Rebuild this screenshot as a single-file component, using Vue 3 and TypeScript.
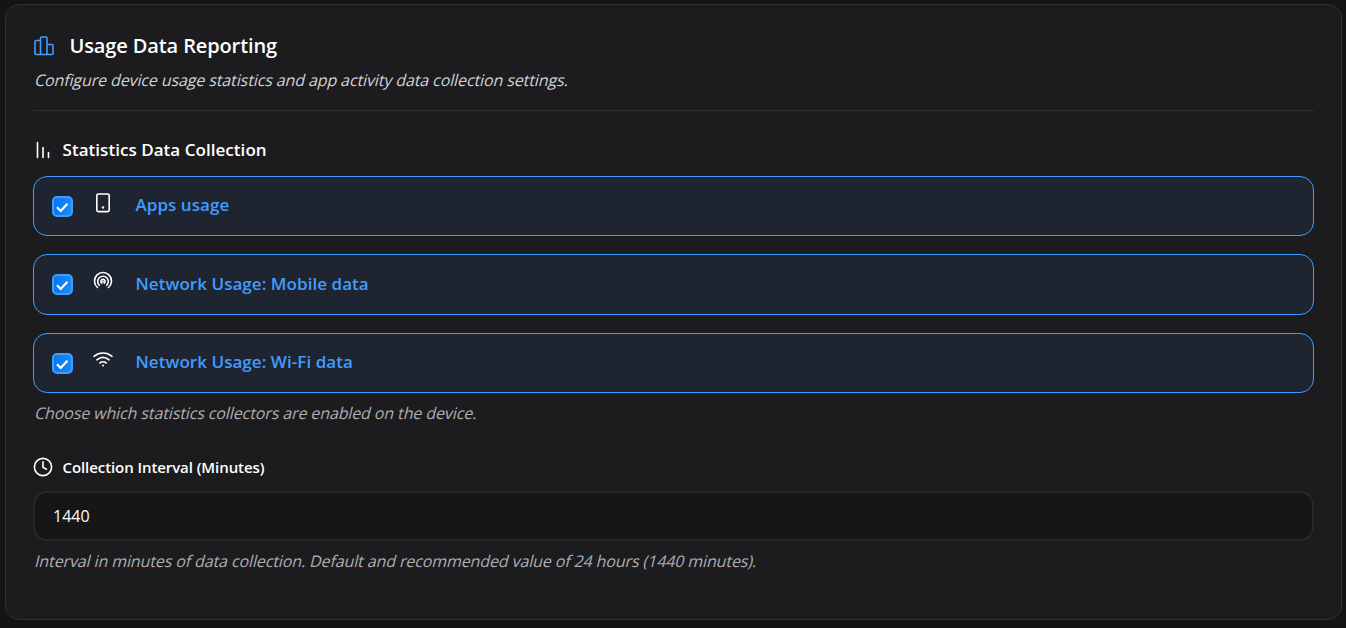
<script setup lang="ts">
import { ref } from 'vue'

interface Collector {
  id: string
  label: string
  icon: 'phone' | 'radio' | 'wifi'
  enabled: boolean
}

const collectors = ref<Collector[]>([
  { id: 'apps', label: 'Apps usage', icon: 'phone', enabled: true },
  { id: 'mobile', label: 'Network Usage: Mobile data', icon: 'radio', enabled: true },
  { id: 'wifi', label: 'Network Usage: Wi-Fi data', icon: 'wifi', enabled: true },
])

const interval = ref('1440')
</script>

<template>
  <main class="page">
    <section class="card">
      <header class="card-header">
        <h2 class="title">
          <svg class="title-icon" viewBox="0 0 20 20" width="20" height="20">
            <path d="M6.500 4.500H2a1 1 0 0 0-1 1V17.500a1 1 0 0 0 1 1h4.500M6.500 18.500V2a1 1 0 0 1 1-1h4.500a1 1 0 0 1 1 1v16.500M13 8.500h5a1 1 0 0 1 1 1v8a1 1 0 0 1-1 1H6.500" />
          </svg>
          <span class="title-text">Usage Data Reporting</span>
        </h2>
        <p class="subtitle">Configure device usage statistics and app activity data collection settings.</p>
      </header>

      <div class="group">
        <h3 class="label">
          <svg class="label-icon" viewBox="0 0 20 20" width="20" height="20">
            <path d="M4.500 2.500v15M10 7.500v10M15.500 12.500v5" />
          </svg>
          <span class="stats-text">Statistics Data Collection</span>
        </h3>
        <div class="options">
          <label v-for="item in collectors" :key="item.id" class="option">
            <input v-model="item.enabled" class="native" type="checkbox" />
            <span class="box">
              <svg v-if="item.enabled" viewBox="0 0 21 21" width="21" height="21">
                <path d="M5 11.300l3.700 3.700 6.700-7.300" />
              </svg>
            </span>
            <svg class="option-icon" viewBox="0 0 20 20" width="20" height="20">
              <g v-if="item.icon === 'phone'">
                <rect x="3.800" y="1" width="12.400" height="17.600" rx="1.600" />
                <circle class="dot" cx="10" cy="14.500" r="1.200" />
              </g>
              <g v-else-if="item.icon === 'radio'">
                <path d="M4.500 16.500a8.500 8.500 0 1 1 11 0M6.300 14.300a5.300 5.300 0 1 1 7.400 0M8.800 12.100a2.100 2.100 0 1 1 2.400 0" />
                <circle class="dot" cx="10" cy="10.500" r="1" />
              </g>
              <g v-else>
                <path d="M1 6.300c5.300-4.400 12.700-4.400 18 0M3.900 9.800c3.700-3 8.500-3 12.200 0M6.900 13c1.900-1.500 4.300-1.500 6.200 0" />
                <circle class="dot" cx="10" cy="15.500" r="1" />
              </g>
            </svg>
            <span class="option-text">{{ item.label }}</span>
          </label>
        </div>
        <p class="hint">Choose which statistics collectors are enabled on the device.</p>
      </div>

      <div class="group interval">
        <label class="label" for="interval">
          <svg class="label-icon clock" viewBox="0 0 20 20" width="20" height="20">
            <circle cx="10" cy="10" r="8.600" />
            <path d="M10 4.700v5.600l3.500 1.900" />
          </svg>
          <span class="interval-text">Collection Interval (Minutes)</span>
        </label>
        <input id="interval" v-model="interval" class="field" type="text" />
        <p class="hint">Interval in minutes of data collection. Default and recommended value of 24 hours (1440 minutes).</p>
      </div>
    </section>
  </main>
</template>

<style>
body {
  margin: 0;
  background: #141416;
}
</style>

<style scoped>
.page {
  box-sizing: border-box;
  height: 628px;
  padding: 4px 4px 8px 5px;
  background: #141416;
  color: #fff;
  font-family: "Open Sans", "Noto Sans", sans-serif;
}
.card {
  box-sizing: border-box;
  height: 616px;
  padding: 27px;
  border: 1px solid #303032;
  border-radius: 14px;
  background: #1c1c1e;
}
svg {
  display: block;
  flex: none;
  fill: none;
  stroke: currentColor;
  stroke-linecap: round;
  stroke-linejoin: round;
  stroke-width: 1.6;
}
h2, h3, p {
  margin: 0;
}
.card-header {
  height: 78px;
  border-bottom: 1px solid #303032;
}
.title {
  display: flex;
  align-items: center;
  height: 28px;
  gap: 15.500px;
  font-size: 20px;
  font-weight: 600;
  letter-spacing: -0.12px;
}
.title-icon {
  margin-left: 1px;
  color: #409cff;
}
.title-text {
  line-height: 28px;
}
/* Slanted upright letterforms, skewed about the text baseline */
.subtitle,
.hint {
  width: max-content;
  margin: 8px 0 0 0.500px;
  font-size: 16px;
  line-height: 24px;
  letter-spacing: -0.115px;
  transform: skewX(-14deg);
  transform-origin: 0 18px;
}
.subtitle {
  color: #d1d1d6;
}
.hint {
  color: #aeaeb2;
}
.group {
  padding-top: 27px;
}
.label {
  display: flex;
  align-items: center;
  height: 24px;
  gap: 9.500px;
  margin: 0;
  font-size: 17px;
  line-height: 24px;
  font-weight: 600;
}
.stats-text {
  letter-spacing: 0.04px;
}
.options {
  display: grid;
  gap: 18px;
  grid-template-rows: 60px 61px 60px;
  margin-top: 14px;
}
.option {
  display: flex;
  align-items: center;
  box-sizing: border-box;
  padding-left: 18px;
  border: 1px solid #409cff;
  border-radius: 14px;
  background: #1f2530;
}
.native {
  position: absolute;
  opacity: 0;
}
.box {
  box-sizing: border-box;
  width: 21px;
  height: 21px;
  border: 2px solid #409cff;
  border-radius: 5px;
  background: linear-gradient(90deg, #0878ec, #1a8af6);
}
.box svg {
  margin: -2px;
  stroke-width: 2.2;
  stroke-linecap: butt;
  stroke-linejoin: miter;
}
.option-icon {
  margin: -7px 0 0 20px;
}
.dot {
  fill: currentColor;
  stroke: none;
}
.option-text {
  margin: -2px 0 0 22.500px;
  color: #409cff;
  font-size: 17px;
  line-height: 24px;
  font-weight: 600;
  letter-spacing: 0.05px;
}
.interval {
  padding-top: 30px;
}
.interval-text {
  font-size: 15px;
  letter-spacing: -0.08px;
}
.field {
  display: block;
  box-sizing: border-box;
  width: 100%;
  height: 50px;
  margin: 12px 0 0;
  padding: 0 18px;
  border: 2px solid #28282a;
  border-radius: 14px;
  outline: none;
  background: #161618;
  color: #fff;
  font: 500 16px "Open Sans", "Noto Sans", sans-serif;
}
</style>
